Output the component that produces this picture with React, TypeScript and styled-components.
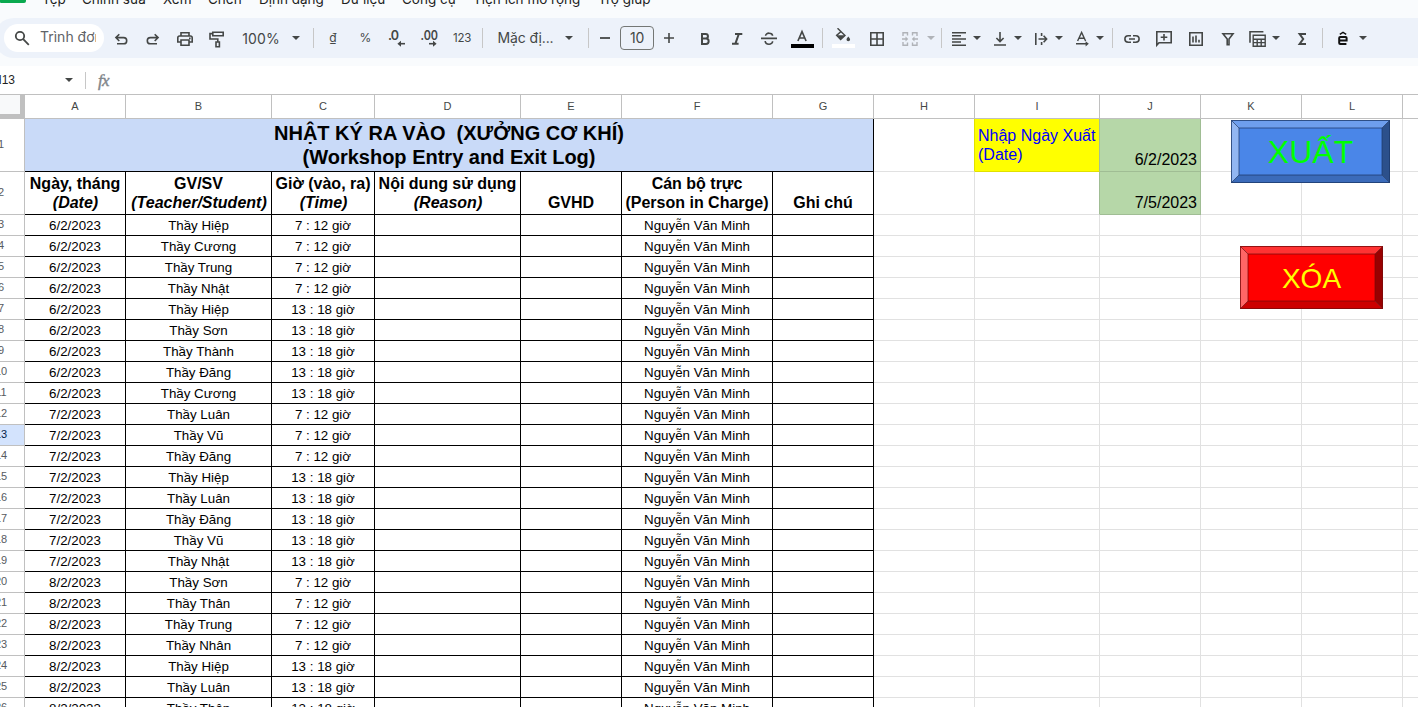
import React from "react";
import styled, { createGlobalStyle } from "styled-components";

const UI = `"Inter", "Roboto", sans-serif`;
const ARIAL = `"Liberation Sans", Arial, sans-serif`;
const COLS = "25px 101px 146px 103px 146px 101px 151px 101px 101px 125px 101px 101px 101px 101px";
const INK = "#444746";

const Global = createGlobalStyle`
  *, *::before, *::after { box-sizing: border-box; }
  html, body { margin: 0; padding: 0; overflow: hidden; background: #fff; }
`;

const Page = styled.div`
  width: 1418px;
  height: 707px;
  overflow: hidden;
  display: flex;
  flex-direction: column;
  background: #fff;
  font-family: ${ARIAL};
`;

const MenuBar = styled.nav`
  flex: none;
  height: 18px;
  display: flex;
  align-items: flex-start;
  overflow: hidden;
  background: #f9fbfd;
`;

const AppBadge = styled.span`
  width: 26px;
  height: 3px;
  margin-right: 16px;
  background: #0aa94f;
  border-radius: 0 0 2px 1px;
`;

const MenuItem = styled.span<{ $w: number }>`
  flex: none;
  width: ${(p) => p.$w}px;
  height: 20px;
  margin-top: -11px;
  font: 400 13.5px/20px ${UI};
  white-space: nowrap;
  color: #1f1f1f;
`;

const ToolStrip = styled.div`
  flex: none;
  height: 48px;
  padding-bottom: 8px;
  background: #f9fbfd;
`;

const Toolbar = styled.div`
  height: 40px;
  margin-left: -6px;
  padding-left: 10px;
  margin-right: -20px;
  display: flex;
  align-items: center;
  background: #edf2fa;
  border-radius: 20px;
`;

const SearchPill = styled.div`
  flex: none;
  width: 100px;
  height: 28px;
  padding: 0 8px 0 10px;
  display: flex;
  align-items: center;
  gap: 9px;
  border-radius: 14px;
  background: #fff;
`;

const SearchText = styled.span`
  flex: 1;
  padding-bottom: 2px;
  overflow: hidden;
  white-space: nowrap;
  font: 400 14px/20px ${UI};
  color: #5f6368;
`;

const Slot = styled.div<{ $gap: number; $w: number }>`
  flex: none;
  width: ${(p) => p.$w}px;
  margin-left: ${(p) => p.$gap}px;
  height: 20px;
  display: flex;
  align-items: center;
  justify-content: center;
  svg { display: block; flex: none; }
`;

const Label = styled.span<{ $size: number; $ls?: number; $dy?: number; $dx?: number }>`
  font-family: ${UI};
  font-size: ${(p) => p.$size}px;
  letter-spacing: ${(p) => p.$ls ?? 0}px;
  line-height: 20px;
  padding-top: ${(p) => p.$dy ?? 0}px;
  padding-left: ${(p) => p.$dx ?? 0}px;
  white-space: nowrap;
  color: ${INK};
`;

const Divider = styled.i<{ $gap: number; $h?: number }>`
  flex: none;
  width: 1px;
  height: ${(p) => p.$h ?? 20}px;
  margin-left: ${(p) => p.$gap}px;
  background: #c7c7c7;
`;

const SizeBox = styled.div`
  flex: none;
  width: 34px;
  height: 24px;
  margin-left: 10px;
  border: 1px solid #747775;
  border-radius: 4px;
  display: flex;
  align-items: center;
  justify-content: center;
`;

const FormulaBar = styled.div`
  flex: none;
  height: 28px;
  display: flex;
  align-items: center;
`;

const NameBox = styled.span`
  width: 15px;
  padding-bottom: 1px;
  display: flex;
  justify-content: flex-end;
  white-space: nowrap;
  font: 400 12px/20px ${ARIAL};
  color: #1f1f1f;
`;

const Fx = styled.span`
  margin-left: 12px;
  padding-top: 1px;
  font: italic 400 17px/20px "Liberation Serif", serif;
  letter-spacing: -0.6px;
  -webkit-text-stroke: 0.4px #80868b;
  color: #80868b;
`;

const Sheet = styled.main`
  position: relative;
  flex: 1;
  overflow: hidden;
  border-top: 1px solid #c0c0c0;
`;

const Row = styled.div<{ $h: number }>`
  display: grid;
  grid-template-columns: ${COLS};
  height: ${(p) => p.$h}px;
`;

const Corner = styled.div`
  background: #f8f9fa;
  border-right: 5px solid #c0c0c0;
  border-bottom: 5px solid #c0c0c0;
`;

const ColHead = styled.div`
  display: flex;
  align-items: center;
  justify-content: center;
  padding-bottom: 2px;
  border-right: 1px solid #c0c0c0;
  border-bottom: 1px solid #c0c0c0;
  font-size: 11px;
  line-height: 12px;
  color: #444746;
`;

const RowHead = styled.div<{ $active?: boolean }>`
  overflow: hidden;
  display: flex;
  align-items: center;
  padding-bottom: 2px;
  border-right: 1px solid #c0c0c0;
  border-bottom: 1px solid #c0c0c0;
  background: ${(p) => (p.$active ? "#d3e3fd" : "#fff")};
  color: ${(p) => (p.$active ? "#041e49" : "#575b5f")};
  font-size: 11px;
  line-height: 12px;
  span {
    flex: none;
    width: 46px;
    margin-left: -22px;
    text-align: center;
  }
`;

const Cell = styled.div<{ $line?: string; $right?: string; $bg?: string; $align?: string; $span?: number }>`
  grid-column: span ${(p) => p.$span ?? 1};
  display: flex;
  flex-direction: column;
  justify-content: flex-end;
  align-items: ${(p) => p.$align ?? "center"};
  overflow: hidden;
  white-space: pre;
  background: ${(p) => p.$bg ?? "transparent"};
  border-right: 1px solid ${(p) => p.$right ?? p.$line ?? "#e1e1e1"};
  border-bottom: 1px solid ${(p) => p.$line ?? "#e1e1e1"};
  color: #000;
`;

const BodyCell = styled(Cell)`
  font-size: 13.33px;
  line-height: 15px;
  padding-bottom: 2px;
`;

const HeadCell = styled(Cell)`
  font-size: 16px;
  font-weight: 700;
  line-height: 19px;
  padding-bottom: 2px;
  em { padding-left: 1px; }
`;

const TitleCell = styled(Cell)`
  font-size: 20px;
  font-weight: 700;
  line-height: 24px;
  padding-bottom: 2px;
`;

const NoteCell = styled(Cell)`
  justify-content: center;
  padding-left: 3px;
  font-size: 16px;
  line-height: 19px;
  color: #0000ff;
`;

const DateCell = styled(Cell)`
  padding: 0 3px 2px 0;
  font-size: 16px;
  line-height: 19px;
`;

const Drawing = styled.svg<{ $x: number; $y: number }>`
  position: absolute;
  left: ${(p) => p.$x}px;
  top: ${(p) => p.$y}px;
`;

const Ic = ({ children, w = 18, color = INK }: { children: React.ReactNode; w?: number; color?: string }) => (
  <svg width={w} height={20} viewBox={`0 0 ${w} 20`} fill="none" stroke={color} strokeWidth={1.6}>
    {children}
  </svg>
);

const Caret = ({ gap, color = INK }: { gap: number; color?: string }) => (
  <Slot $gap={gap} $w={8}>
    <svg width={8} height={4} viewBox="0 0 8 4"><path d="M0 0h8L4 4z" fill={color} /></svg>
  </Slot>
);

const Tools = () => (
  <>
    <Slot $gap={8} $w={18}><Ic><path d="M7.3 6.2 3.9 9.6 7.3 13M4 9.6h7.6a3.1 3.1 0 0 1 0 6.2H5" /></Ic></Slot>
    <Slot $gap={14} $w={18}><Ic><path d="M10.7 6.2 14.1 9.6 10.7 13M14 9.6H6.4a3.1 3.1 0 0 0 0 6.2H13" /></Ic></Slot>
    <Slot $gap={14} $w={18}>
      <Ic>
        <path d="M5 8V4.8h8V8M5 14H1.8V9.8Q1.8 8 3.6 8h10.8q1.8 0 1.8 1.8V14H13M5 12h8v5.2H5z" />
        <path d="M13 9.6h1.6v1.6H13z" fill={INK} stroke="none" />
      </Ic>
    </Slot>
    <Slot $gap={13} $w={18}>
      <Ic><path d="M5.8 4.2h10.4v3.6H5.8zM5.8 5.6H3v5.4h7.8V14M9 14h3.4v4.8H9z" /></Ic>
    </Slot>
    <Slot $gap={17} $w={36}><Label $size={14} $ls={0.1} $dy={1} $dx={2}>100%</Label></Slot>
    <Caret gap={14} />
    <Divider $gap={13} />
    <Slot $gap={15} $w={8}><Label $size={12}>₫</Label></Slot>
    <Slot $gap={23} $w={11}><Label $size={12}>%</Label></Slot>
    <Slot $gap={17} $w={18}>
      <Ic>
        <text x="0" y="12.4" fontFamily="Inter, sans-serif" fontSize="12.5" fontWeight="600" fill={INK} stroke="none" textLength="11">.0</text>
        <path d="M17 15.7h-6" /><path d="M13 12.7v6l-3.6-3z" fill={INK} stroke="none" />
      </Ic>
    </Slot>
    <Slot $gap={14} $w={19}>
      <Ic w={19}>
        <text x="0.5" y="12.4" fontFamily="Inter, sans-serif" fontSize="12.5" fontWeight="600" fill={INK} stroke="none" textLength="17.5" lengthAdjust="spacingAndGlyphs">.00</text>
        <path d="M9 15.7h6" /><path d="M13 12.7v6l3.6-3z" fill={INK} stroke="none" />
      </Ic>
    </Slot>
    <Slot $gap={14} $w={18}><Label $size={11.5} $ls={-0.3}>123</Label></Slot>
    <Divider $gap={11} />
    <Slot $gap={15} $w={54}><Label $size={14} $ls={-0.1} $dx={1}>Mặc đị...</Label></Slot>
    <Caret gap={13} />
    <Divider $gap={15} />
    <Slot $gap={11} $w={10}><Ic w={10}><path d="M0 10h10" strokeWidth={1.8} /></Ic></Slot>
    <SizeBox><Label $size={14} $ls={-0.2}>10</Label></SizeBox>
    <Slot $gap={10} $w={10}><Ic w={10}><path d="M0 10h10M5 5v10" strokeWidth={1.6} /></Ic></Slot>
    <Slot $gap={22} $w={18}>
      <Ic><path d="M6 5.9h3.6a2.3 2.3 0 0 1 0 4.7H6zM6 10.6h4a2.6 2.6 0 0 1 0 5.3H6z" strokeWidth={2} /></Ic>
    </Slot>
    <Slot $gap={14} $w={18}><Ic><path d="M7 6h7.3M4 15.8h6.6M10.8 6 7.3 15.8" strokeWidth={2} /></Ic></Slot>
    <Slot $gap={14} $w={18}>
      <Ic><path d="M1 10.4h16M12.6 7.8C12.4 4.4 5.6 4.2 5.6 7.8M5.2 13c.2 4.2 7.4 4.2 7.4.2" /></Ic>
    </Slot>
    <Slot $gap={13} $w={23}>
      <Ic w={23}><path d="M6.9 13 11 3.6 15.1 13M8.2 10h5.6" /><path d="M0 16h23v4H0z" fill="#000" stroke="none" /></Ic>
    </Slot>
    <Divider $gap={8} />
    <Slot $gap={9} $w={23}>
      <Ic w={23}>
        <path d="M5.5.2 13 7.4l-4.4 4.2L4.6 7.4 9 3.4" strokeWidth={1.4} />
        <path d="M4.6 7.2h8.4l-4.4 4.6z" fill={INK} stroke="none" />
        <path d="M16.3 8.4c1.2 1.5 1.8 2.2 1.8 3a1.8 1.8 0 0 1-3.6 0c0-.8.6-1.5 1.8-3z" fill={INK} stroke="none" />
        <path d="M0 16h23v4H0z" fill="#fff" stroke="none" />
      </Ic>
    </Slot>
    <Slot $gap={13} $w={18}><Ic><path d="M2.8 4.8h12.4v12.4H2.8zM9 4.8v12.4M2.8 11h12.4" /></Ic></Slot>
    <Slot $gap={15} $w={18}>
      <Ic color="#b0b3b8">
        <path d="M6.5 4.8H2V8M2 14v3.2h4.5M11.5 4.8H16V8M16 14v3.2h-4.5M6.5 4v3.5M11.5 4v3.5M6.5 18v-3.5M11.5 18v-3.5M1 11h4.5M17 11h-4.5" strokeWidth={1.4} />
        <path d="M4.5 8.6 7.2 11l-2.7 2.4zM13.5 8.6 10.8 11l2.7 2.4z" fill="#b0b3b8" stroke="none" />
      </Ic>
    </Slot>
    <Caret gap={8} color="#b0b3b8" />
    <Divider $gap={6} />
    <Slot $gap={8} $w={18}><Ic><path d="M2 4.8h14M2 7.8h9M2 10.9h14M2 14h9M2 17.2h14" strokeWidth={1.5} /></Ic></Slot>
    <Caret gap={5} />
    <Slot $gap={10} $w={18}><Ic><path d="M9 4v9.4M5.4 10 9 13.6 12.6 10M3 17h12" /></Ic></Slot>
    <Caret gap={5} />
    <Slot $gap={10} $w={18}><Ic><path d="M3.8 5v12M9.6 5v3M9.6 14v3M6.5 11h8M11.6 7.8l3 3.2-3 3.2" /></Ic></Slot>
    <Caret gap={5} />
    <Slot $gap={10} $w={18}><Ic><path d="M4.6 13 8.6 4.4 12.6 13M6 10.2h5.2M3 15.8h11" strokeWidth={1.4} /><path d="M12.6 13.2v5.2l3.2-2.6z" fill={INK} stroke="none" /></Ic></Slot>
    <Caret gap={5} />
    <Divider $gap={8} />
    <Slot $gap={10} $w={18}><Ic><path d="M8 7.7H5.2a3.3 3.3 0 0 0 0 6.6H8M10 7.7h2.8a3.3 3.3 0 0 1 0 6.6H10M6 11h6" /></Ic></Slot>
    <Slot $gap={14} $w={18}><Ic><path d="M1.8 3.8h14.4v11H4l-2.2 2.4zM9 6v6.6M5.7 9.3h6.6" /></Ic></Slot>
    <Slot $gap={14} $w={18}><Ic><path d="M2.8 4.8h12.4v12.4H2.8zM6 8.6v6M9 7.4v7.2M12 11.8v2.8" /></Ic></Slot>
    <Slot $gap={14} $w={18}><Ic><path d="M4 5.8h10L10 11v5.8H8.2V11z" strokeWidth={1.6} /></Ic></Slot>
    <Slot $gap={12} $w={18}>
      <Ic>
        <path d="M1 14.8V3.8h13.4" />
        <path d="M4.2 7.2h12v11h-12zM4.2 11.2h12M4.2 14.6h12M8.2 11.2v7M12.2 11.2v7" strokeWidth={1.4} />
      </Ic>
    </Slot>
    <Caret gap={5} />
    <Slot $gap={13} $w={18}><Ic><path d="M13 6H6.6L10.2 11 6.6 16H13" strokeWidth={2} /></Ic></Slot>
    <Divider $gap={11} />
    <Slot $gap={15} $w={10}>
      <Ic w={10} color="#111"><path d="M1.8 6.4 5 4.4l3.2 2" strokeWidth={1.4} /><path d="M1.2 12.4h7.4V10q0-1-1-1H2.2q-1 0-1 1v5q0 1 1 1h6.2" strokeWidth={2} /></Ic>
    </Slot>
    <Caret gap={11} />
  </>
);

const menus: [string, number][] = [
  ["Tệp", 40], ["Chỉnh sửa", 81], ["Xem", 45], ["Chèn", 51], ["Định dạng", 82],
  ["Dữ liệu", 61], ["Công cụ", 71], ["Tiện ích mở rộng", 125], ["Trợ giúp", 60],
];

const M = "7 : 12 giờ";
const P = "13 : 18 giờ";
const log: [string, string, string][] = [
  ["6/2/2023", "Hiệp", M], ["6/2/2023", "Cương", M], ["6/2/2023", "Trung", M], ["6/2/2023", "Nhật", M],
  ["6/2/2023", "Hiệp", P], ["6/2/2023", "Sơn", P], ["6/2/2023", "Thành", P], ["6/2/2023", "Đăng", P],
  ["6/2/2023", "Cương", P], ["7/2/2023", "Luân", M], ["7/2/2023", "Vũ", M], ["7/2/2023", "Đăng", M],
  ["7/2/2023", "Hiệp", P], ["7/2/2023", "Luân", P], ["7/2/2023", "Đăng", P], ["7/2/2023", "Vũ", P],
  ["7/2/2023", "Nhật", P], ["8/2/2023", "Sơn", M], ["8/2/2023", "Thân", M], ["8/2/2023", "Trung", M],
  ["8/2/2023", "Nhân", M], ["8/2/2023", "Hiệp", P], ["8/2/2023", "Luân", P], ["8/2/2023", "Thân", P],
];

const Blank = ({ n }: { n: number }) => <>{Array.from({ length: n }, (_, i) => <Cell key={i} />)}</>;

type BevelProps = {
  x: number; y: number; w: number; h: number; text: string; size: number; baseline: number;
  ink: string; face: string; top: string; left: string; right: string; bottom: string; edge: string;
};

const Bevel = (p: BevelProps) => {
  const { w, h } = p;
  const b = 8;
  return (
    <Drawing $x={p.x} $y={p.y} width={w} height={h} viewBox={`0 0 ${w} ${h}`}>
      <path d={`M0 0H${w}L${w - b} ${b}H${b}z`} fill={p.top} />
      <path d={`M0 0V${h}L${b} ${h - b}V${b}z`} fill={p.left} />
      <path d={`M${w} 0V${h}L${w - b} ${h - b}V${b}z`} fill={p.right} />
      <path d={`M0 ${h}H${w}L${w - b} ${h - b}H${b}z`} fill={p.bottom} />
      <path d={`M${b} ${b}H${w - b}V${h - b}H${b}z`} fill={p.face} />
      <g stroke={p.edge} fill="none">
        <path d={`M.5.5H${w - 0.5}V${h - 0.5}H.5z`} strokeOpacity={0.8} />
        <path d={`M${b} ${b}H${w - b}V${h - b}H${b}zM0 0 ${b} ${b}M${w} 0 ${w - b} ${b}M0 ${h} ${b} ${h - b}M${w} ${h} ${w - b} ${h - b}`} strokeOpacity={0.75} />
      </g>
      <text x={w / 2} y={p.baseline} textAnchor="middle" fontFamily="Liberation Sans, Arial, sans-serif" fontSize={p.size} fill={p.ink}>
        {p.text}
      </text>
    </Drawing>
  );
};

export default function App() {
  return (
    <Page>
      <Global />
      <MenuBar>
        <AppBadge />
        {menus.map(([t, w]) => <MenuItem key={t} $w={w}>{t}</MenuItem>)}
      </MenuBar>
      <ToolStrip>
        <Toolbar>
          <SearchPill>
            <svg width={17} height={18} viewBox="0 0 17 18" fill="none" stroke={INK} strokeWidth={1.8}>
              <circle cx="6" cy="7" r="4.2" /><path d="m9.2 10.2 5.6 5.6" />
            </svg>
            <SearchText>Trình đơn</SearchText>
          </SearchPill>
          <Tools />
        </Toolbar>
      </ToolStrip>
      <FormulaBar>
        <NameBox>H13</NameBox>
        <Caret gap={50} />
        <Divider $gap={12} $h={17} />
        <Fx>fx</Fx>
      </FormulaBar>
      <Sheet>
        <Row $h={24}>
          <Corner />
          {"ABCDEFGHIJKL".split("").map((c) => <ColHead key={c}>{c}</ColHead>)}
          <ColHead />
        </Row>
        <Row $h={53}>
          <RowHead><span>1</span></RowHead>
          <TitleCell $span={7} $line="#000" $bg="#c9daf8">
            <span>NHẬT KÝ RA VÀO  (XƯỞNG CƠ KHÍ)</span>
            <span>(Workshop Entry and Exit Log)</span>
          </TitleCell>
          <Cell $right="#e1e100" />
          <NoteCell $bg="#ffff00" $line="#e1e100" $right="#a2be95" $align="flex-start">
            <span>Nhập Ngày Xuất</span>
            <span>(Date)</span>
          </NoteCell>
          <DateCell $bg="#b6d7a8" $line="#a0bd94" $align="flex-end">6/2/2023</DateCell>
          <Blank n={3} />
        </Row>
        <Row $h={43}>
          <RowHead><span>2</span></RowHead>
          <HeadCell $line="#000"><span>Ngày, tháng</span><em>(Date)</em></HeadCell>
          <HeadCell $line="#000"><span>GV/SV</span><em>(Teacher/Student)</em></HeadCell>
          <HeadCell $line="#000"><span>Giờ (vào, ra)</span><em>(Time)</em></HeadCell>
          <HeadCell $line="#000"><span>Nội dung sử dụng</span><em>(Reason)</em></HeadCell>
          <HeadCell $line="#000"><span>GVHD</span></HeadCell>
          <HeadCell $line="#000"><span>Cán bộ trực</span><span>(Person in Charge)</span></HeadCell>
          <HeadCell $line="#000"><span>Ghi chú</span></HeadCell>
          <Cell />
          <Cell $right="#a0bd94" />
          <DateCell $bg="#b6d7a8" $line="#a0bd94" $align="flex-end">7/5/2023</DateCell>
          <Blank n={3} />
        </Row>
        {log.map(([date, name, time], i) => (
          <Row $h={21} key={i}>
            <RowHead $active={i === 10}><span>{i + 3}</span></RowHead>
            <BodyCell $line="#000">{date}</BodyCell>
            <BodyCell $line="#000">{`Thầy ${name}`}</BodyCell>
            <BodyCell $line="#000">{time}</BodyCell>
            <BodyCell $line="#000" />
            <BodyCell $line="#000" />
            <BodyCell $line="#000">Nguyễn Văn Minh</BodyCell>
            <BodyCell $line="#000" />
            <Blank n={6} />
          </Row>
        ))}
        <Bevel x={1231} y={25} w={159} h={63} text="XUẤT" size={32} baseline={43} ink="#00ff00"
          face="#4a86e8" top="#6e9eed" left="#92b6f1" right="#2c508b" bottom="#3b6bba" edge="#1d3a6b" />
        <Bevel x={1240} y={151} w={143} h={63} text="XÓA" size={28} baseline={42} ink="#ffff00"
          face="#ff0000" top="#ff3333" left="#ff6666" right="#990000" bottom="#cc0000" edge="#7a0a0a" />
      </Sheet>
    </Page>
  );
}
